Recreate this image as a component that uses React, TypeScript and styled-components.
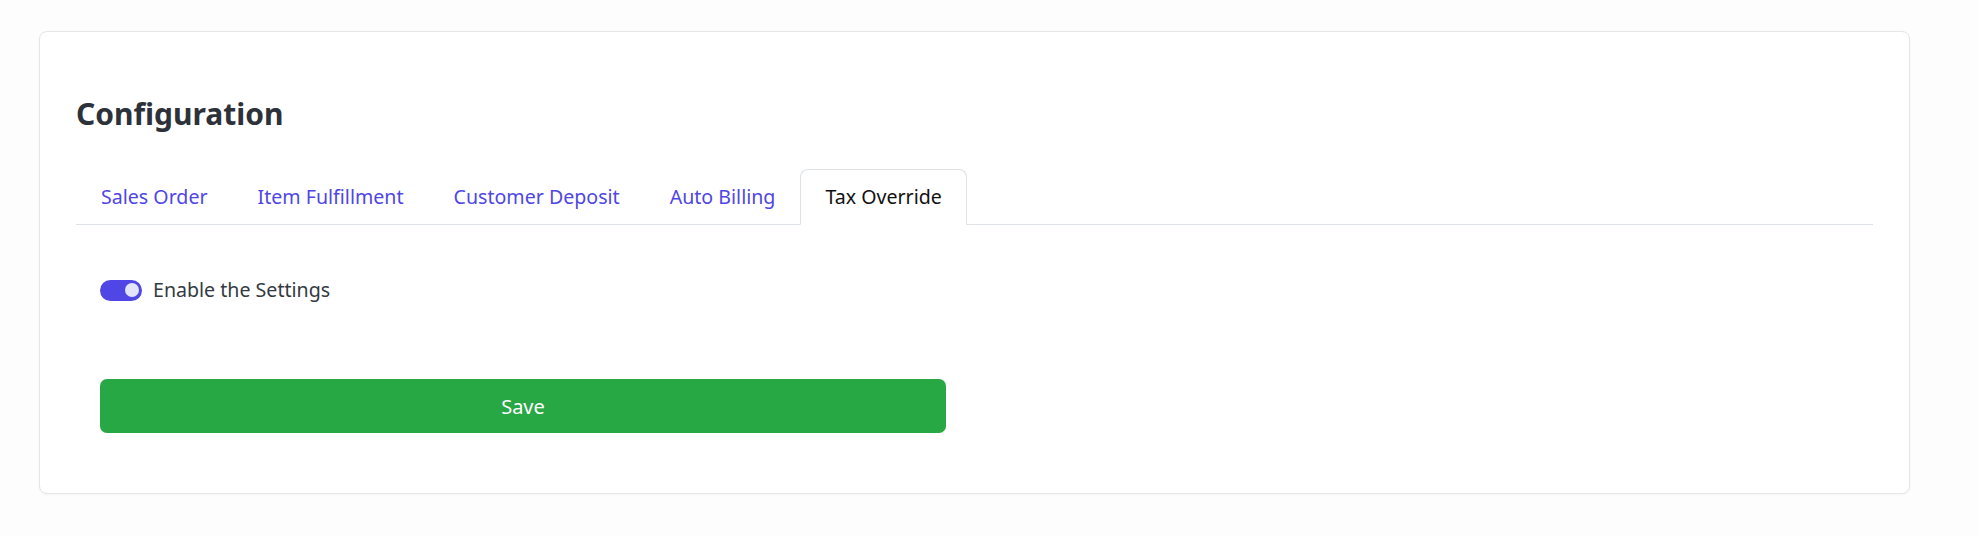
import * as React from 'react'
import styled, { createGlobalStyle } from 'styled-components'

const GlobalStyle = createGlobalStyle`
  html, body {
    margin: 0;
    padding: 0;
    background: #fdfdfd;
    font-family: "Noto Sans", "Open Sans", sans-serif;
  }
`

const Page = styled.div`
  padding: 31px 69px 40px 39px;
`

const Card = styled.section`
  background: #ffffff;
  border: 1px solid #e6e6e6;
  border-radius: 8px;
  box-shadow: 0 1px 3px rgb(0 0 0 / 4%);
  padding: 24px 36px 60px 36px;
`

const Title = styled.h2`
  margin: 0 0 37px 0;
  padding-top: 40px;
  font-size: 30px;
  line-height: 36px;
  font-weight: 700;
  color: #2d3139;
`

const TabList = styled.ul`
  display: flex;
  list-style: none;
  margin: 0;
  padding: 0;
  border-bottom: 1px solid #dee2e6;
`

const TabButton = styled.button<{ $active?: boolean }>`
  display: block;
  margin-bottom: -1px;
  padding: 12px 24px;
  font-family: inherit;
  font-size: 19.6px;
  line-height: 30px;
  cursor: pointer;
  background: ${(p) => (p.$active ? '#ffffff' : 'transparent')};
  color: ${(p) => (p.$active ? '#111111' : '#4f46e5')};
  border: 1px solid ${(p) => (p.$active ? '#dee2e6' : 'transparent')};
  border-bottom-color: ${(p) => (p.$active ? '#ffffff' : 'transparent')};
  border-radius: 8px 8px 0 0;
`

const Panel = styled.div`
  padding: 50px 24px 0 24px;
`

const ToggleRow = styled.label`
  display: flex;
  align-items: center;
  gap: 11px;
  font-size: 19.6px;
  line-height: 30px;
  color: #343a40;
  cursor: pointer;
`

const Track = styled.span<{ $on: boolean }>`
  position: relative;
  display: inline-block;
  width: 42px;
  height: 21px;
  border-radius: 11px;
  background: ${(p) => (p.$on ? '#4f46e5' : '#d1d5db')};
  transition: background 0.2s;
`

const Knob = styled.span<{ $on: boolean }>`
  position: absolute;
  top: 3.5px;
  left: ${(p) => (p.$on ? '25px' : '3.5px')};
  width: 14px;
  height: 14px;
  border-radius: 50%;
  background: #e3e4fb;
  transition: left 0.2s;
`

const HiddenCheckbox = styled.input`
  display: none;
`

const SaveButton = styled.button`
  display: block;
  width: 846px;
  height: 54px;
  margin-top: 74px;
  border: none;
  border-radius: 7px;
  background: #28a745;
  color: #ffffff;
  font-family: inherit;
  font-size: 20px;
  cursor: pointer;
`

const tabs = ['Sales Order', 'Item Fulfillment', 'Customer Deposit', 'Auto Billing', 'Tax Override']

export default function App() {
  const [active, setActive] = React.useState('Tax Override')
  const [enabled, setEnabled] = React.useState(true)

  return (
    <>
      <GlobalStyle />
      <Page>
        <Card>
          <Title>Configuration</Title>
          <TabList>
            {tabs.map((t) => (
              <li key={t}>
                <TabButton $active={t === active} onClick={() => setActive(t)}>
                  {t}
                </TabButton>
              </li>
            ))}
          </TabList>
          <Panel>
            <ToggleRow>
              <HiddenCheckbox
                type="checkbox"
                checked={enabled}
                onChange={() => setEnabled(!enabled)}
              />
              <Track $on={enabled}>
                <Knob $on={enabled} />
              </Track>
              Enable the Settings
            </ToggleRow>
            <SaveButton>Save</SaveButton>
          </Panel>
        </Card>
      </Page>
    </>
  )
}
